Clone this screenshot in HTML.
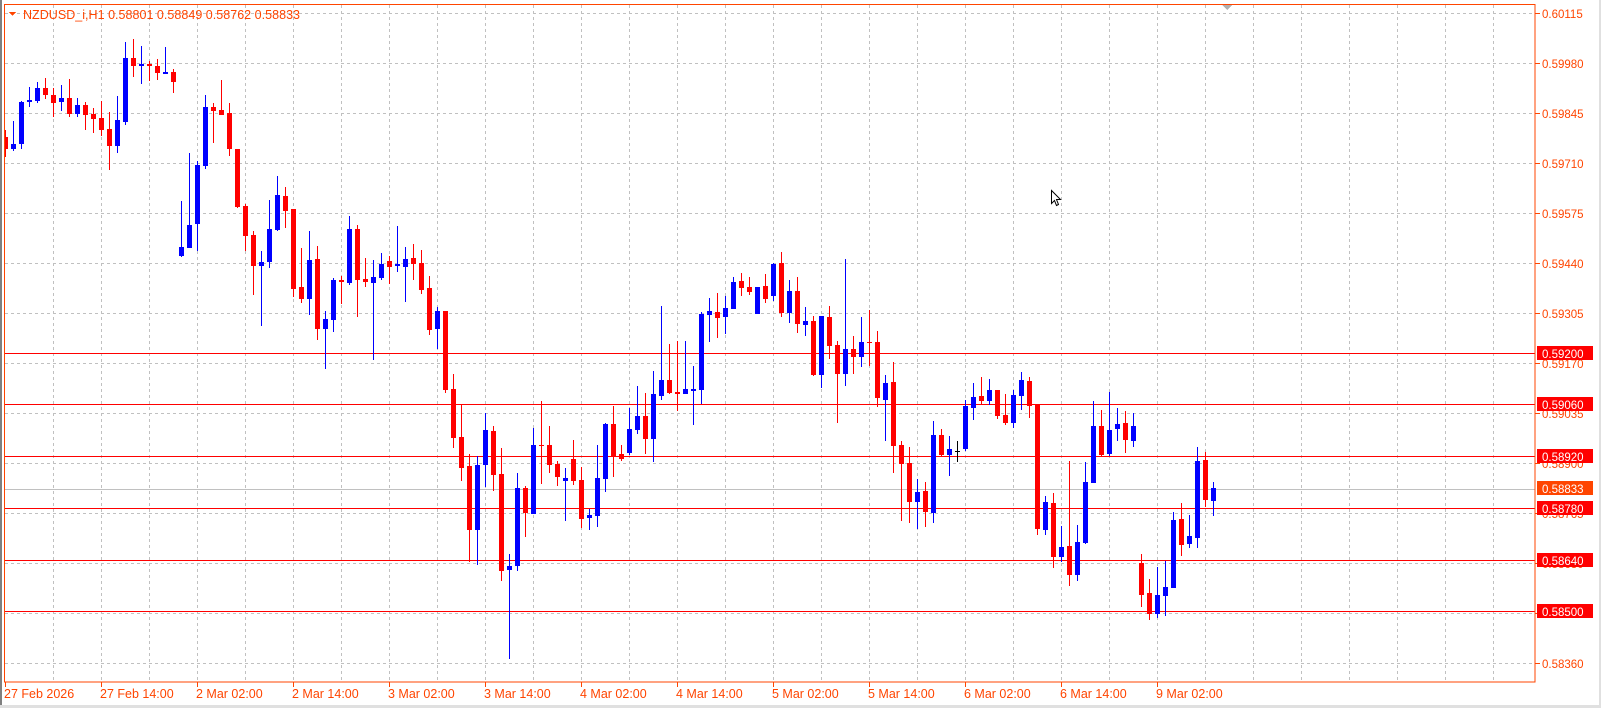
<!DOCTYPE html>
<html><head><meta charset="utf-8">
<style>
html,body{margin:0;padding:0;background:#fff;width:1601px;height:708px;overflow:hidden}
svg{display:block}
text{font-family:"Liberation Sans",Arial,sans-serif;font-size:11.5px}
text.d{font-size:12.5px}
</style></head>
<body>
<div id="c"></div>
<script>
var s='<svg xmlns="http://www.w3.org/2000/svg" width="1601" height="708" shape-rendering="crispEdges">';
s+='<rect x="0" y="0" width="1601" height="708" fill="#fff"/>';
s+='<rect x="0" y="0" width="2" height="708" fill="#808080"/>';
s+='<rect x="1599" y="0" width="2" height="708" fill="#e0e0e0"/>';
s+='<rect x="0" y="705" width="1601" height="3" fill="#e0e0e0"/>';
var g='#c0c0c0';
for(var j=0;j<=13;j++){var y=663-50*j;s+='<line x1="5" y1="'+(y+0.5)+'" x2="1535" y2="'+(y+0.5)+'" stroke="'+g+'" stroke-dasharray="3,3"/>';}
for(var x=53;x<1535;x+=48){s+='<line x1="'+(x+0.5)+'" y1="5" x2="'+(x+0.5)+'" y2="682" stroke="'+g+'" stroke-dasharray="3,3"/>';}
var lv=[[353,'0.59200'],[404,'0.59060'],[456,'0.58920'],[508,'0.58780'],[560,'0.58640'],[611,'0.58500']];
s+='<line x1="5" y1="489.5" x2="1535" y2="489.5" stroke="#c0c0c0"/>';
lv.forEach(function(l){s+='<line x1="5" y1="'+(l[0]+0.5)+'" x2="1535" y2="'+(l[0]+0.5)+'" stroke="#ff0000"/>';});
var d=[
'r 130 157 137 149','b 121 151 144 149','b 101 149 102 144','b 87 107 100 102','b 82 103 88 101','r 78 99 88 95','r 88 117 95 103','b 85 111 98 102','r 79 117 98 114','b 98 117 105 114',
'r 102 130 105 115','r 108 133 114 119','r 101 136 118 130','r 112 170 129 146','b 96 153 120 146','b 42 125 58 122','r 39 77 58 66','b 46 84 64 66','r 61 81 64 66','r 59 80 66 73',
'b 47 74 72 74','r 69 93 72 82','b 201 257 247 256','b 153 248 225 248','b 161 251 165 224','b 95 169 107 166','r 103 143 107 111','r 80 115 110 115','r 103 156 113 149','r 149 208 149 207',
'r 204 251 206 236','r 231 295 235 266','b 251 326 262 266','b 200 268 229 262','b 176 231 195 230','r 187 228 196 211','r 209 297 209 289','r 248 303 287 299','b 231 315 260 299','r 246 340 259 329',
'b 311 369 319 329','b 278 332 280 320','r 276 304 280 282','b 216 285 229 283','r 225 317 229 280','r 258 287 279 282','b 260 360 277 283','b 253 280 264 278','r 256 284 261 267','b 226 272 264 266',
'b 247 302 259 267','r 244 280 258 264','r 250 294 263 290','r 276 335 288 330','b 307 349 311 329','r 311 393 311 390','r 374 448 389 438','r 405 481 437 468','r 454 562 466 530','b 456 565 465 530',
'b 413 487 430 465','r 426 491 431 475','r 448 581 474 571','b 554 659 566 570','b 473 571 488 566','r 486 537 488 513','b 428 514 445 514','r 401 484 445 446','r 426 473 445 465','r 461 486 464 477',
'b 468 521 478 481','r 440 485 459 481','r 467 528 480 519','b 509 530 515 518','b 445 527 478 516','b 423 492 424 479','r 406 477 424 456','r 445 461 454 459','b 408 455 429 453','b 386 434 416 430',
'r 393 454 416 439','b 371 462 394 439','b 306 400 380 396','r 344 394 380 393','r 341 411 392 394','b 341 394 389 394','b 366 425 389 391','b 312 404 314 390','b 298 342 311 315','r 293 338 312 318',
'b 296 334 308 317','b 277 309 282 309','r 273 296 281 288','r 277 295 287 292','b 287 314 287 314','r 274 303 286 299','b 263 301 264 296','r 252 317 263 313','b 280 323 291 313','r 277 333 291 324',
'b 307 336 321 325','r 316 376 321 375','b 316 388 316 375','r 306 359 317 346','r 341 423 345 374','b 259 386 349 374','r 336 374 349 357','b 317 367 342 357','r 310 366 342 343','r 331 407 342 398',
'b 375 441 383 400','r 362 473 382 446','r 441 521 445 464','r 447 523 463 502','b 479 529 492 502','r 482 527 491 512','b 421 523 435 513','r 429 456 435 455','b 436 476 449 455','k 441 462 451 452',
'b 400 451 406 449','b 383 420 397 408','r 377 404 396 401','b 379 405 390 401','r 390 419 390 416','r 394 425 415 423','b 390 428 395 423','b 372 410 380 396','r 377 418 381 406','r 404 535 404 529',
'b 496 535 502 530','r 493 568 503 557','b 526 562 547 557','r 461 586 546 575','b 525 581 542 575','b 462 544 482 543','b 401 483 426 483','r 410 457 426 455','b 392 456 430 454','b 408 441 424 429',
'r 411 453 423 440','b 413 447 426 441','r 554 607 563 595','r 579 620 593 614','b 567 618 595 614','b 561 616 587 596','b 512 588 520 588','r 503 556 519 545','b 515 548 536 544','b 447 548 461 538',
'r 452 507 460 500','b 482 516 488 501'];
var col={r:'#ff0000',b:'#0000ff',k:'#000000'};
d.forEach(function(t,i){var p=t.split(' ');var c=col[p[0]];var h=+p[1],l=+p[2],a=+p[3],b=+p[4];var x=5+8*i;
 s+='<rect x="'+x+'" y="'+h+'" width="1" height="'+(l-h)+'" fill="'+c+'"/>';
 var bx=Math.max(x-2,5);var bw=x+3-bx;
 s+='<rect x="'+bx+'" y="'+a+'" width="'+bw+'" height="'+Math.max(b-a,1)+'" fill="'+c+'"/>';
});
var o='#ff4500';
s+='<rect x="4.5" y="4.5" width="1530.5" height="677.5" fill="none" stroke="'+o+'"/>';
var pl=['0.60115','0.59980','0.59845','0.59710','0.59575','0.59440','0.59305','0.59170','0.59035','0.58900','0.58765','0.58630','0.58495','0.58360'];
pl.forEach(function(t,k){var y=13+50*k;s+='<line x1="1535" y1="'+(y+0.5)+'" x2="1540" y2="'+(y+0.5)+'" stroke="'+o+'"/>';
 s+='<text x="1542" y="'+(y+5)+'" fill="'+o+'">'+t+'</text>';});
lv.forEach(function(l){s+='<rect x="1537" y="'+(l[0]-7)+'" width="56" height="14" fill="#ff0000"/><text x="1542" y="'+(l[0]+5)+'" fill="#fff">'+l[1]+'</text>';});
s+='<rect x="1537" y="481" width="56" height="14" fill="#ff4500"/><text x="1542" y="493" fill="#fff">0.58833</text>';
var dl=['27 Feb 2026','27 Feb 14:00','2 Mar 02:00','2 Mar 14:00','3 Mar 02:00','3 Mar 14:00','4 Mar 02:00','4 Mar 14:00','5 Mar 02:00','5 Mar 14:00','6 Mar 02:00','6 Mar 14:00','9 Mar 02:00'];
dl.forEach(function(t,k){var x=5+96*k;s+='<line x1="'+(x+0.5)+'" y1="682" x2="'+(x+0.5)+'" y2="687" stroke="'+o+'"/><text class="d" x="'+(x-1)+'" y="698" fill="'+o+'">'+t+'</text>';});
s+='<polygon points="9,12 16,12 12.5,16" fill="'+o+'"/>';
s+='<text class="d" x="23" y="19" fill="'+o+'" textLength="277">NZDUSD_i,H1  0.58801 0.58849 0.58762 0.58833</text>';
s+='<polygon points="1222,5 1232,5 1227,10" fill="#b0b0b0"/>';
s+='<path d="M1051.5,190.5 L1051.5,203.5 L1054.5,200.5 L1056.5,205.5 L1058.5,204.5 L1056.5,199.5 L1060.5,199.5 Z" fill="#fff" stroke="#000" shape-rendering="auto"/>';
s+='</svg>';
document.getElementById('c').innerHTML=s;
</script>
</body></html>
